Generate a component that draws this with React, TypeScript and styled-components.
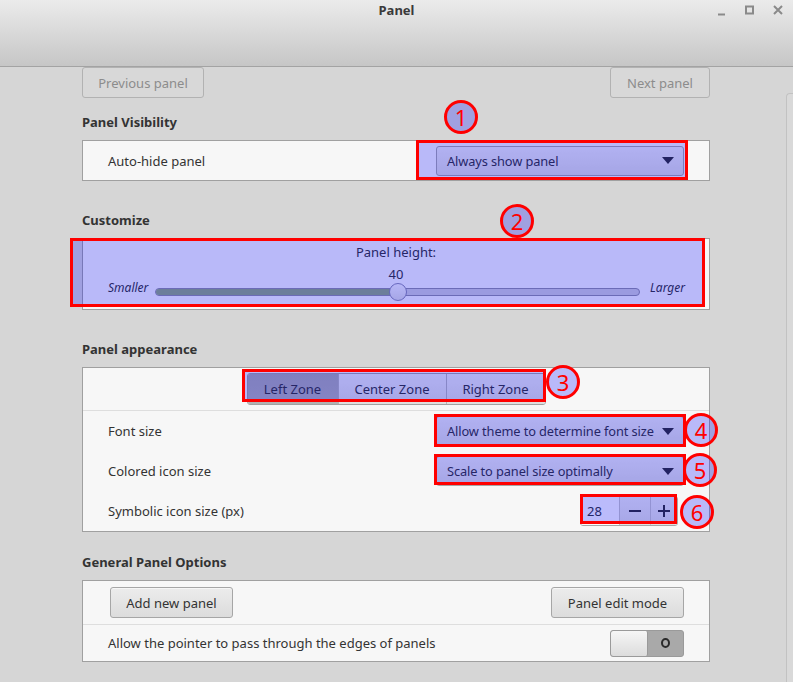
import styled, { createGlobalStyle } from "styled-components";

const Global = createGlobalStyle`
  html, body {
    margin: 0;
    padding: 0;
    background: #d6d6d6;
  }
  body {
    font-family: "Noto Sans", "DejaVu Sans", sans-serif;
    font-size: 13px;
    color: #333333;
  }
`;

const Window = styled.div`
  position: relative;
  width: 793px;
  height: 682px;
  overflow: hidden;
  background: #d6d6d6;
`;

const TitleBar = styled.div`
  height: 66px;
  border-bottom: 1px solid #a3a3a3;
  background: linear-gradient(#ebebeb, #e0e0e0 30%, #c6c6c6);
  display: flex;
  justify-content: center;
  position: relative;
`;

const Title = styled.div`
  font-weight: bold;
  font-size: 13px;
  line-height: 20px;
  color: #3a3a3a;
`;

const Controls = styled.div`
  position: absolute;
  right: 8px;
  top: 4px;
  display: flex;
  gap: 14px;
`;

const Body = styled.div`
  display: flex;
`;

const Content = styled.div`
  width: 628px;
  margin-left: 82px;
  display: flex;
  flex-direction: column;
`;

const Scrollbar = styled.div`
  margin-left: auto;
  margin-top: 26px;
  width: 6px;
  height: 615px;
  border-left: 1px solid #c2c2c2;
  border-top: 1px solid #c2c2c2;
  border-top-left-radius: 4px;
  background: #d9d9d9;
`;

const NavRow = styled.div`
  display: flex;
  justify-content: space-between;
`;

const Button = styled.button<{ $w?: number }>`
  height: 31px;
  ${(p) => (p.$w ? `width: ${p.$w}px;` : "padding: 0 16px;")}
  font-family: inherit;
  font-size: 13px;
  color: #333;
  border: 1px solid #a6a6a6;
  border-radius: 3px;
  background: linear-gradient(#ececec, #dcdcdc);
  box-shadow: inset 0 1px 0 #f6f6f6;

  &:disabled {
    color: #8c8c8c;
    background: #d8d8d8;
    border-color: #b2b2b2;
    box-shadow: none;
  }
`;

const Section = styled.div<{ $top: number }>`
  margin-top: ${(p) => p.$top}px;
  display: flex;
  flex-direction: column;
`;

const Heading = styled.div`
  font-weight: bold;
  line-height: 18px;
  height: 18px;
  margin-bottom: 9px;
  color: #333;
`;

const Frame = styled.div`
  background: #f7f7f7;
  border: 1px solid #a0a0a0;
  display: flex;
  flex-direction: column;
`;

const Row = styled.div<{ $h: number; $right?: number }>`
  height: ${(p) => p.$h}px;
  display: flex;
  align-items: center;
  justify-content: space-between;
  padding: 0 ${(p) => p.$right ?? 25}px 0 25px;
`;

const Separator = styled.div`
  height: 1px;
  background: #dedede;
`;

const Label = styled.span`
  color: #333;
`;

const Combo = styled.div`
  width: 248px;
  height: 30px;
  box-sizing: border-box;
  border: 1px solid #a6a6a6;
  border-radius: 3px;
  background: linear-gradient(#ededed, #dddddd);
  display: flex;
  align-items: center;
  justify-content: space-between;
  padding: 0 9px 0 10px;
  font-size: 12.8px;
  letter-spacing: -0.1px;
`;

const Arrow = styled.span`
  width: 0;
  height: 0;
  border-left: 6px solid transparent;
  border-right: 6px solid transparent;
  border-top: 7px solid #2e2e2e;
`;

const SliderBox = styled.div`
  display: flex;
  flex-direction: column;
  align-items: center;
  padding: 5px 0 8px;
`;

const Caption = styled.div<{ $gap?: number }>`
  line-height: 16px;
  margin-top: ${(p) => p.$gap ?? 0}px;
`;

const SliderRow = styled.div`
  align-self: stretch;
  height: 18px;
  margin-top: 1px;
  display: flex;
  align-items: center;
  padding: 0 24px 0 25px;
`;

const SideLabel = styled.span`
  font-style: italic;
  font-size: 12px;
  margin-bottom: 9px;
`;

const Track = styled.div`
  flex: 1;
  margin: 0 10px 0 7px;
  height: 6px;
  border: 1px solid #8f8f9f;
  border-radius: 4px;
  background: #cfcfd6;
  position: relative;
`;

const TrackFill = styled.div`
  position: absolute;
  left: 0;
  top: 0;
  bottom: 0;
  border-radius: 4px 0 0 4px;
  background: #90a87a;
`;

const Thumb = styled.div`
  position: absolute;
  top: 50%;
  width: 16px;
  height: 16px;
  margin: -9px 0 0 -9px;
  border-radius: 50%;
  border: 1px solid #8a8aa8;
  background: linear-gradient(#f4f4f4, #dedede);
`;

const ZoneRow = styled.div`
  height: 42px;
  display: flex;
  justify-content: center;
  padding-top: 5px;
  box-sizing: border-box;
`;

const ZoneGroup = styled.div`
  display: flex;
  height: 30px;
  border: 1px solid #a2a2a2;
  border-radius: 3px;
  overflow: hidden;
`;

const Zone = styled.div<{ $active?: boolean; $w: number }>`
  width: ${(p) => p.$w}px;
  display: flex;
  align-items: center;
  justify-content: center;
  background: ${(p) =>
    p.$active ? "linear-gradient(#aaaaaa, #b2b2b2)" : "linear-gradient(#ececec, #dedede)"};
  & + & {
    border-left: 1px solid #b4b4b4;
  }
`;

const Spin = styled.div`
  display: flex;
  height: 30px;
  box-sizing: border-box;
  border: 1px solid #a6a6a6;
  border-radius: 3px;
  overflow: hidden;
  background: #ffffff;
`;

const SpinEntry = styled.div`
  width: 38px;
  display: flex;
  align-items: center;
  padding-left: 6px;
  box-sizing: border-box;
  background: #fafafa;
`;

const SpinButton = styled.div<{ $w: number }>`
  width: ${(p) => p.$w}px;
  display: flex;
  align-items: center;
  justify-content: center;
  border-left: 1px solid #c4c4c4;
  background: linear-gradient(#ececec, #dedede);
`;

const ButtonRow = styled.div`
  height: 43px;
  display: flex;
  align-items: center;
  justify-content: space-between;
  padding: 0 25px 0 27px;
`;

const Switch = styled.div`
  width: 74px;
  height: 27px;
  box-sizing: border-box;
  border: 1px solid #9a9a9a;
  border-radius: 3px;
  background: #a9a9a9;
  display: flex;
  overflow: hidden;
`;

const Knob = styled.div`
  width: 36px;
  border-right: 1px solid #9a9a9a;
  background: linear-gradient(#f6f6f6, #dcdcdc);
  border-radius: 2px;
`;

const SwitchOff = styled.div`
  flex: 1;
  display: flex;
  align-items: center;
  justify-content: center;
`;

const Ring = styled.div`
  width: 5px;
  height: 6px;
  border: 2px solid #2a2a2a;
  border-radius: 50%;
`;

const Box = styled.div<{ $x: number; $y: number; $w: number; $h: number }>`
  position: absolute;
  left: ${(p) => p.$x}px;
  top: ${(p) => p.$y}px;
  width: ${(p) => p.$w}px;
  height: ${(p) => p.$h}px;
  box-sizing: border-box;
  border: 3px solid #ff0000;
  background: rgba(0, 0, 255, 0.25);
  pointer-events: none;
`;

const Badge = styled.div<{ $x: number; $y: number }>`
  position: absolute;
  left: ${(p) => p.$x - 17}px;
  top: ${(p) => p.$y - 17}px;
  width: 34px;
  height: 34px;
  box-sizing: border-box;
  border: 3px solid #ff0000;
  border-radius: 50%;
  background: rgba(0, 0, 255, 0.25);
  color: #ff0000;
  font-size: 22px;
  line-height: 28px;
  text-align: center;
  pointer-events: none;
`;

const markers = [
  { n: 1, box: [416, 140, 272, 40], at: [461, 117] },
  { n: 2, box: [70, 238, 635, 69], at: [517, 221] },
  { n: 3, box: [242, 369, 304, 33], at: [563, 382] },
  { n: 4, box: [434, 414, 252, 33], at: [701, 430] },
  { n: 5, box: [434, 454, 252, 31], at: [700, 470] },
  { n: 6, box: [580, 494, 97, 30], at: [697, 512] },
];

const Minus = () => (
  <svg width="14" height="14" viewBox="0 0 14 14">
    <path d="M1 7h12" stroke="#2e2e2e" strokeWidth="2" />
  </svg>
);

const Plus = () => (
  <svg width="14" height="14" viewBox="0 0 14 14">
    <path d="M1 7h12M7 1v12" stroke="#2e2e2e" strokeWidth="2" />
  </svg>
);

const App = () => {
  const percent = 50;
  return (
    <Window>
      <Global />
      <TitleBar>
        <Title>Panel</Title>
        <Controls>
          <svg width="14" height="14" viewBox="0 0 14 14">
            <path d="M3 10.5h7" stroke="#8a8a8a" strokeWidth="2" />
          </svg>
          <svg width="14" height="14" viewBox="0 0 14 14">
            <rect x="3" y="2.5" width="7" height="7" fill="none" stroke="#8a8a8a" strokeWidth="2" />
          </svg>
          <svg width="14" height="14" viewBox="0 0 14 14">
            <path d="M3 2l8 8M11 2l-8 8" stroke="#8a8a8a" strokeWidth="2" />
          </svg>
        </Controls>
      </TitleBar>
      <Body>
        <Content>
          <NavRow>
            <Button disabled $w={122}>Previous panel</Button>
            <Button disabled $w={100}>Next panel</Button>
          </NavRow>

          <Section $top={15}>
            <Heading>Panel Visibility</Heading>
            <Frame>
              <Row $h={39}>
                <Label>Auto-hide panel</Label>
                <Combo>
                  Always show panel
                  <Arrow />
                </Combo>
              </Row>
            </Frame>
          </Section>

          <Section $top={30}>
            <Heading>Customize</Heading>
            <Frame>
              <SliderBox>
                <Caption>Panel height:</Caption>
                <Caption $gap={6}>40</Caption>
                <SliderRow>
                  <SideLabel>Smaller</SideLabel>
                  <Track>
                    <TrackFill style={{ width: `${percent}%` }} />
                    <Thumb style={{ left: `${percent}%` }} />
                  </Track>
                  <SideLabel>Larger</SideLabel>
                </SliderRow>
              </SliderBox>
            </Frame>
          </Section>

          <Section $top={30}>
            <Heading>Panel appearance</Heading>
            <Frame>
              <ZoneRow>
                <ZoneGroup>
                  <Zone $active $w={90}>Left Zone</Zone>
                  <Zone $w={107}>Center Zone</Zone>
                  <Zone $w={98}>Right Zone</Zone>
                </ZoneGroup>
              </ZoneRow>
              <Separator />
              <Row $h={40}>
                <Label>Font size</Label>
                <Combo>
                  Allow theme to determine font size
                  <Arrow />
                </Combo>
              </Row>
              <Row $h={40}>
                <Label>Colored icon size</Label>
                <Combo>
                  Scale to panel size optimally
                  <Arrow />
                </Combo>
              </Row>
              <Row $h={40} $right={31}>
                <Label>Symbolic icon size (px)</Label>
                <Spin>
                  <SpinEntry>28</SpinEntry>
                  <SpinButton $w={30}>
                    <Minus />
                  </SpinButton>
                  <SpinButton $w={26}>
                    <Plus />
                  </SpinButton>
                </Spin>
              </Row>
            </Frame>
          </Section>

          <Section $top={21}>
            <Heading>General Panel Options</Heading>
            <Frame>
              <ButtonRow>
                <Button $w={123}>Add new panel</Button>
                <Button $w={133}>Panel edit mode</Button>
              </ButtonRow>
              <Separator />
              <Row $h={36}>
                <Label>Allow the pointer to pass through the edges of panels</Label>
                <Switch>
                  <Knob />
                  <SwitchOff>
                    <Ring />
                  </SwitchOff>
                </Switch>
              </Row>
            </Frame>
          </Section>
        </Content>
        <Scrollbar />
      </Body>

      {markers.map((m) => (
        <div key={m.n}>
          <Box $x={m.box[0]} $y={m.box[1]} $w={m.box[2]} $h={m.box[3]} />
          <Badge $x={m.at[0]} $y={m.at[1]}>{m.n}</Badge>
        </div>
      ))}
    </Window>
  );
};

export default App;
